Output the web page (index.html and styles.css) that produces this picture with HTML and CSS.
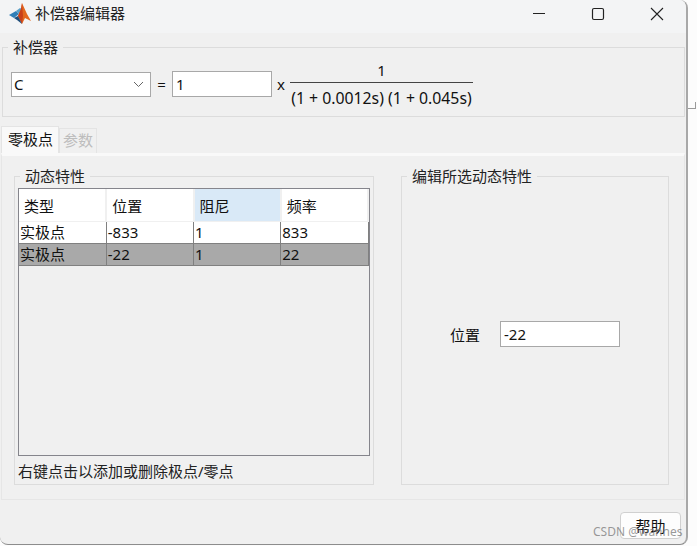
FILE: index.html
```html
<!DOCTYPE html>
<html lang="zh-CN">
<head>
    <meta charset="UTF-8">
    <title>补偿器编辑器</title>
    <link rel="stylesheet" href="styles.css">
</head>
<body>

<div class="window">
    <header class="titlebar">
        <svg class="logo" width="24" height="24" viewBox="0 0 24 24">
            <polygon points="1,13 8,9 11,12 6,16" fill="#2f7fb8"/>
            <polygon points="8,9 11,12 14,7 12,6" fill="#5aa0c8"/>
            <polygon points="14,1 19,12 23,19 17,16 14,22 10,14 13,7" fill="#e2681f"/>
            <polygon points="14,1 13,7 10,14 14,22 15,14" fill="#c9401a"/>
            <polygon points="6,16 10,14 14,22 9,18" fill="#1f4e7a"/>
        </svg>
        <span class="title">补偿器编辑器</span>
        <div class="window-btns">
            <svg width="14" height="14" viewBox="0 0 14 14"><path d="M1 6.5H13" stroke="#222" stroke-width="1" fill="none"/></svg>
            <svg width="14" height="14" viewBox="0 0 14 14"><rect x="1.5" y="1.5" width="11" height="11" rx="1.5" stroke="#222" stroke-width="1.2" fill="none"/></svg>
            <svg width="14" height="14" viewBox="0 0 14 14"><path d="M1 1L13 13M13 1L1 13" stroke="#222" stroke-width="1.1" fill="none"/></svg>
        </div>
    </header>

    <fieldset class="group comp-group">
        <legend>补偿器</legend>
        <div class="comp-row">
            <div class="combo">
                <span>C</span>
                <svg width="11" height="7" viewBox="0 0 11 7"><path d="M1 1L5.5 5.5L10 1" stroke="#666" fill="none"/></svg>
            </div>
            <span class="equals">=</span>
            <div class="field gain">1</div>
            <span class="times">x</span>
            <div class="fraction">
                <div class="numer">1</div>
                <div class="denom">(1 + 0.0012s) (1 + 0.045s)</div>
            </div>
        </div>
    </fieldset>

    <div class="tabs">
        <div class="tab active">零极点</div>
        <div class="tab">参数</div>
    </div>

    <div class="panel">
        <fieldset class="group dyn-group">
            <legend>动态特性</legend>
            <div class="table-box">
                <table>
                    <thead>
                        <tr><th>类型</th><th>位置</th><th class="sorted">阻尼</th><th>频率</th></tr>
                    </thead>
                    <tbody>
                        <tr><td>实极点</td><td>-833</td><td>1</td><td>833</td></tr>
                        <tr class="selected"><td>实极点</td><td>-22</td><td>1</td><td>22</td></tr>
                    </tbody>
                </table>
            </div>
            <p class="hint">右键点击以添加或删除极点/零点</p>
        </fieldset>

        <fieldset class="group edit-group">
            <legend>编辑所选动态特性</legend>
            <div class="edit-row">
                <span>位置</span>
                <div class="field pos">-22</div>
            </div>
        </fieldset>
    </div>

    <div class="footer">
        <button class="help-btn">帮助</button>
    </div>
</div>

<div class="edge-mark"></div>
<span class="watermark">CSDN @wannes</span>

</body>
</html>
```

FILE: styles.css
```css
html, body {
    margin: 0;
    padding: 0;
    background-color: #fcfcfc;
}

body {
    font-family: "Noto Sans", "Noto Sans CJK SC", sans-serif;
    font-size: 15px;
    color: #111;
    width: 697px;
    height: 546px;
    position: relative;
    overflow: hidden;
}

.window {
    width: 688px;
    height: 545px;
    box-sizing: border-box;
    background-color: #f0f0f0;
    border-right: 2px solid #a8a8a8;
    border-bottom: 1px solid #8c8c8c;
    border-radius: 0 8px 8px 8px;
    overflow: hidden;
}

.titlebar {
    height: 33px;
    box-sizing: border-box;
    background-color: #f3f4f5;
    display: flex;
    align-items: center;
    padding: 0 0 5px 8px;
}

.logo {
    margin-right: 3px;
}

.title {
    color: #222;
    margin-bottom: 4px;
}

.window-btns {
    margin-left: auto;
    display: flex;
    gap: 45px;
    margin-right: 22px;
}

.group {
    box-sizing: border-box;
    border: 1px solid #dcdcdc;
    margin: 0;
    min-width: 0;
}

.group legend {
    line-height: 18px;
    padding: 0 5px;
    margin-left: -3px;
    color: #222;
}

.comp-group {
    height: 79px;
    width: 683px;
    margin: 5px 0 0 2px;
    padding: 0 8px;
}

.comp-row {
    display: flex;
    align-items: center;
    height: 58px;
    margin-top: -1px;
}

.combo {
    width: 140px;
    height: 25px;
    box-sizing: border-box;
    border: 1px solid #a8a8a8;
    background-color: #fff;
    display: flex;
    align-items: center;
    justify-content: space-between;
    padding: 0 2px;
}

.combo svg {
    margin-right: 4px;
}

.equals {
    width: 21px;
    text-align: center;
}

.field {
    box-sizing: border-box;
    height: 26px;
    line-height: 24px;
    border: 1px solid #a8a8a8;
    background-color: #fff;
    padding: 0 3px;
}

.gain {
    width: 100px;
}

.times {
    margin: 0 5px;
}

.fraction {
    width: 183px;
    text-align: center;
    margin-top: 1px;
}

.numer {
    height: 26px;
    line-height: 28px;
    border-bottom: 1px solid #444;
}

.denom {
    height: 31px;
    line-height: 31px;
    font-size: 15.8px;
    white-space: nowrap;
}

.tabs {
    display: flex;
    align-items: flex-end;
    height: 27px;
    margin: 9px 0 0 1px;
}

.tab {
    box-sizing: border-box;
    height: 25px;
    line-height: 23px;
    padding: 0 3px;
    border: 1px solid #e4e4e4;
    border-bottom: none;
    color: #bdbdbd;
}

.tab.active {
    height: 27px;
    line-height: 24px;
    padding: 0 6px;
    width: 58px;
    white-space: nowrap;
    background-color: #f9f9f9;
    color: #111;
}

.panel {
    width: 684px;
    height: 347px;
    margin-left: 1px;
    box-sizing: border-box;
    border: 1px solid #e6e6e6;
    border-top: 3px solid #f9f9f9;
    display: flex;
    padding: 11px 0 0 12px;
}

.dyn-group {
    width: 360px;
    height: 318px;
    padding: 0 3px;
}

.dyn-group legend {
    margin-left: 2px;
}

.edit-group {
    width: 268px;
    height: 318px;
    margin-left: 27px;
    padding: 0 8px;
    display: flex;
    flex-direction: column;
}

.table-box {
    width: 352px;
    height: 268px;
    box-sizing: border-box;
    border: 1px solid #85858c;
    margin-top: 3px;
    overflow: hidden;
}

table {
    border-collapse: collapse;
    table-layout: fixed;
    width: 350px;
}

th {
    height: 32px;
    padding: 0 0 0 5px;
    background-color: #fff;
    font-weight: normal;
    text-align: left;
    border-right: 2px solid #f0f0f0;
    border-bottom: 1px solid #f0f0f0;
}

th.sorted {
    background-color: #d9e9f7;
}

td {
    height: 21px;
    padding: 0 0 0 1px;
    background-color: #fff;
    line-height: 21px;
    border-right: 1px solid #808080;
    border-bottom: 1px solid #808080;
}

.selected td {
    background-color: #a9a9a9;
}

.hint {
    margin: 6px 0 0 0;
    line-height: 18px;
    color: #222;
}

.edit-row {
    display: flex;
    align-items: center;
    margin: 136px 0 0 40px;
    gap: 20px;
}

.pos {
    width: 120px;
}

.footer {
    display: flex;
    justify-content: flex-end;
    padding: 12px 5px 0 0;
}

.help-btn {
    width: 61px;
    height: 27px;
    font: inherit;
    line-height: 24px;
    color: #111;
    background-color: #fdfdfd;
    border: 1px solid #d0d0d0;
    border-radius: 4px;
    padding: 0;
}

.edge-mark {
    position: absolute;
    left: 688px;
    top: 102px;
    width: 8px;
    height: 7px;
    box-sizing: border-box;
    border-right: 1px solid #9a9a9a;
    border-bottom: 1px solid #9a9a9a;
}

.watermark {
    position: absolute;
    left: 593px;
    top: 523px;
    font-size: 12px;
    color: rgba(120, 120, 120, 0.75);
}
```
